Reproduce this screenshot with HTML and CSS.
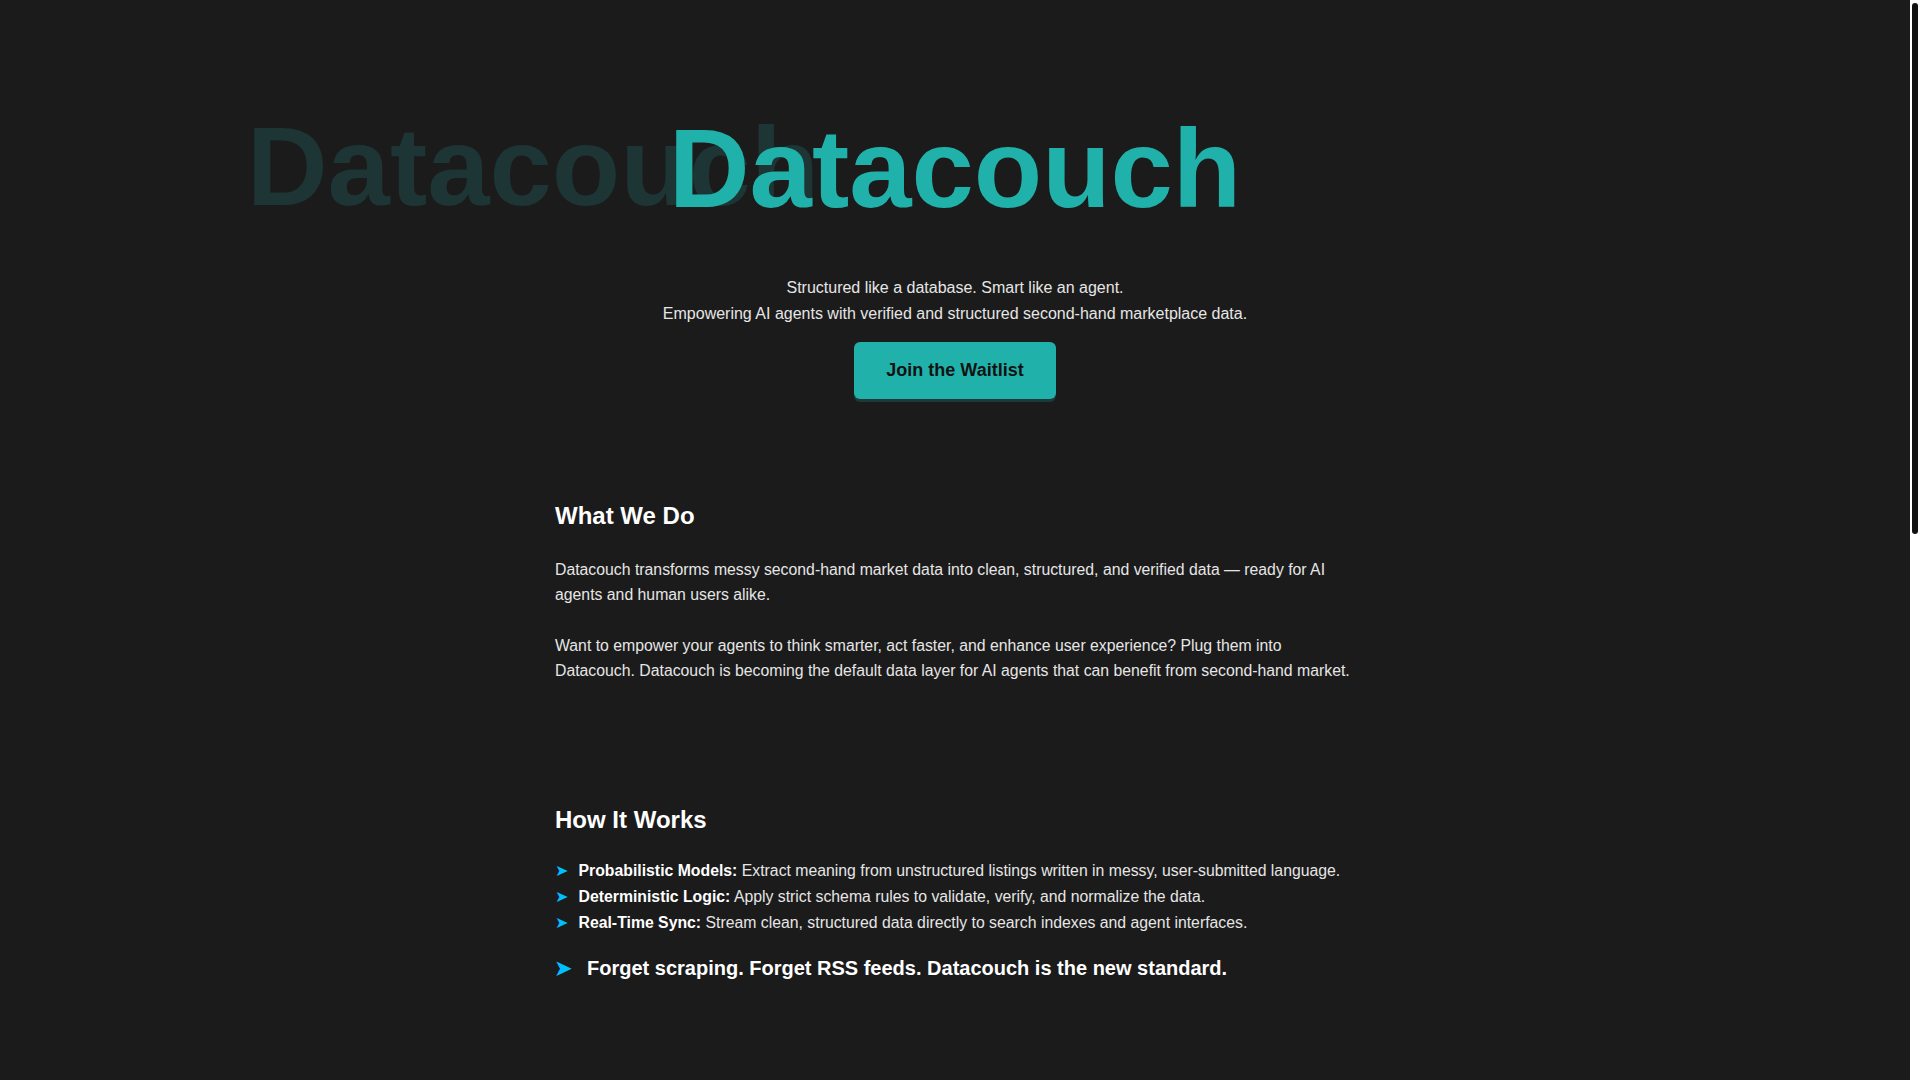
FILE: index.html
```html
<!DOCTYPE html>
<html lang="en">
<head>
<meta charset="utf-8">
<title>Datacouch</title>
<link rel="stylesheet" href="styles.css">
</head>
<body>
<div class="page">
  <header class="hero">
    <h1 class="title"><span class="title-text" data-text="Datacouch">Datacouch</span></h1>
    <p class="tagline">Structured like a database. Smart like an agent.<br>Empowering AI agents with verified and structured second-hand marketplace data.</p>
    <a class="cta" href="#">Join the Waitlist</a>
  </header>
  <main class="content">
    <section class="section">
      <h2>What We Do</h2>
      <p>Datacouch transforms messy second-hand market data into clean, structured, and verified data — ready for AI agents and human users alike.</p>
      <p>Want to empower your agents to think smarter, act faster, and enhance user experience? Plug them into Datacouch. Datacouch is becoming the default data layer for AI agents that can benefit from second-hand market.</p>
    </section>
    <section class="section">
      <h2>How It Works</h2>
      <ul class="steps">
        <li><strong>Probabilistic Models:</strong> Extract meaning from unstructured listings written in messy, user-submitted language.</li>
        <li><strong>Deterministic Logic:</strong> Apply strict schema rules to validate, verify, and normalize the data.</li>
        <li><strong>Real-Time Sync:</strong> Stream clean, structured data directly to search indexes and agent interfaces.</li>
      </ul>
      <p class="standard"><span class="arrow">➤</span>Forget scraping. Forget RSS feeds. Datacouch is the new standard.</p>
    </section>
  </main>
</div>
<div class="scrollbar" aria-hidden="true"><div class="scrollbar-thumb"></div></div>
</body>
</html>
```

FILE: styles.css
```css
html {
  background: #1b1b1b;
}

body {
  margin: 0;
  display: flex;
  min-height: 100vh;
  overflow: hidden;
  background: #1b1b1b;
  color: #e0e0e0;
  font-family: "Liberation Sans", Arial, sans-serif;
  font-size: 16px;
  line-height: 1.6;
}

.page {
  flex: 1;
  min-width: 0;
}

.scrollbar {
  flex: 0 0 10px;
  width: 10px;
  background: #ffffff;
}

.scrollbar-thumb {
  margin: 3px 2px 0;
  height: 531px;
  border-radius: 3px;
  background: #111111;
}

.hero {
  display: flex;
  flex-direction: column;
  align-items: center;
  text-align: center;
  padding: 102px 20px 43px;
}

.title {
  margin: 0;
  font-size: 112px;
  line-height: 1.2;
  font-weight: 700;
  color: #20b2aa;
}

.title-text {
  position: relative;
  z-index: 0;
  display: inline-block;
}

.title-text::before {
  content: attr(data-text);
  position: absolute;
  left: -422px;
  top: -2px;
  z-index: -1;
  color: #1d3534;
  white-space: nowrap;
}

.tagline {
  margin: 39px 0 15px;
  color: #e6e6e6;
}

.cta {
  display: inline-block;
  padding: 18px 32px;
  border-radius: 6px;
  background: #20b2aa;
  color: #121212;
  font-size: 18px;
  font-weight: 700;
  line-height: normal;
  text-decoration: none;
  box-shadow: 0 3px 0 #1d3a38;
}

.content {
  max-width: 800px;
  margin: 0 auto;
}

.section {
  padding: 60px 0;
}

.section + .section {
  padding-top: 61.5px;
}

.section h2 {
  margin: 0 0 24px;
  font-size: 24px;
  line-height: 1.2;
  font-weight: 700;
  color: #ffffff;
}

.section p {
  margin: 0;
  font-size: 15.8px;
  line-height: 24.8px;
  color: #e6e6e6;
}

.section h2 + p {
  margin-top: 27.5px;
}

.section p + p {
  margin-top: 27px;
}

.steps {
  list-style: none;
  margin: 0;
  padding: 0;
  font-size: 15.8px;
  line-height: 25.6px;
  color: #e6e6e6;
}

.steps li::before {
  content: "➤";
  color: #00bfff;
  margin-right: 10.5px;
}

.steps strong {
  color: #ffffff;
}

.section .standard {
  margin-top: 16.5px;
  font-size: 20px;
  line-height: 32px;
  font-weight: 700;
  color: #ffffff;
}

.standard .arrow {
  color: #00bfff;
  margin-right: 15px;
}
```
